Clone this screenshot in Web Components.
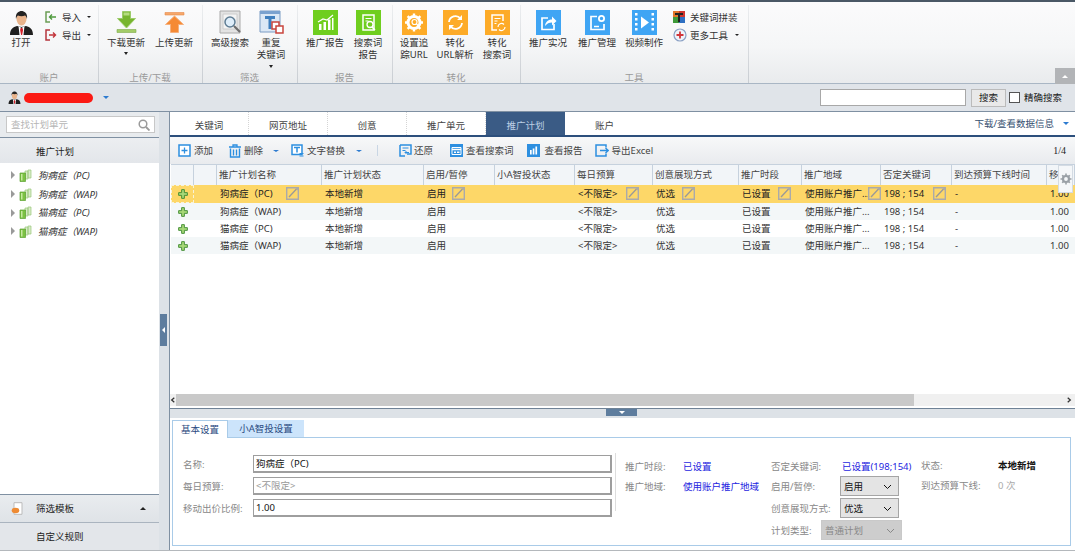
<!DOCTYPE html>
<html lang="zh"><head><meta charset="utf-8"><title>推广计划</title>
<style>
html,body{margin:0;padding:0;height:551px;overflow:hidden;background:#fff;font:9.5px/13px "Noto Sans","Noto Sans CJK SC",sans-serif;color:#333}
</style></head><body>
<app-shell></app-shell>
<script>
const ICONS={
person:[25,'<path d="M1 25c0-6 3-8 7-9l4.500 1 4.500-1c4 1 7 3 7 9z" fill="#1f1f1f"/><path d="M9.500 16l3 2 3-2-1 9h-4z" fill="#fff"/><path d="M11.600 18h1.800l.7 2-1 5h-1l-1-5z" fill="#d4202a"/><ellipse cx="12.500" cy="9" rx="5" ry="6.500" fill="#e9b48c"/><path d="M7 9c-1-6 3-8 5.500-8S19 3 18 9c-.5-2-1-3-2-3.500-2 1-5 1-7 0C8 6 7.500 7 7 9z" fill="#222"/>'],
imp:[12,'<path d="M5 1H1v10h4M1 1v10" fill="none" stroke="#6b9d55" stroke-width="1.500"/><path d="M11 6H5M7 3.500L4.500 6 7 8.500" fill="none" stroke="#4f9a3e" stroke-width="1.400"/>'],
exp:[12,'<path d="M5 1H1v10h4" fill="none" stroke="#b5353c" stroke-width="1.500"/><path d="M4 6h6M8 3.500L10.500 6 8 8.500" fill="none" stroke="#c2343a" stroke-width="1.400"/>'],
down:[25,'<path d="M8.500 1.500h8v7h5L12.500 18 3.500 8.500h5z" fill="#77b52f" stroke="#9ccb6a"/><path d="M3 19.500h19v3H3z" fill="#a3cc68" stroke="#7eab4a" stroke-width=".6"/><path d="M9.500 2.500h6v3h-6z" fill="#b4db7f"/>'],
up:[25,'<path d="M3 2.500h19v2.500H3z" fill="#f6a86c" stroke="#e88c49" stroke-width=".6"/><path d="M8.500 22.500h8v-8h5L12.500 6 3.500 14.500h5z" fill="#f58a34" stroke="#f6b07c"/>'],
srch:[25,'<path d="M2 1h20v22H2z" fill="#e3e3e3" stroke="#aaa"/><path d="M5 4h14v15H5z" fill="#f4f4f4" stroke="#ccc"/><circle cx="12" cy="12" r="5" fill="#dfeefa" stroke="#5f7d94" stroke-width="1.500"/><path d="M16 16l6 6" stroke="#6d6d6d" stroke-width="2.200"/>'],
rep:[25,'<path d="M1 1h20v21H1z" fill="#dbe8f5" stroke="#7b9cc4"/><path d="M1 1h20v3H1z" fill="#7aa2cf"/><path d="M6 6h10v3h-3.500v10h-3V9H6z" fill="#3f7fbe"/><path d="M13 12h7v7h-7z" fill="#fff" stroke="#c9453e" stroke-width="1.500"/><path d="M17 16h7v7h-7z" fill="#fff" stroke="#c9453e" stroke-width="1.500"/>'],
rpt:[25,'<path d="M0 0h25v25H0z" fill="#6fce1f"/><path d="M6 20v-6h2.500v6zM10.500 20v-8H13v8zM15 20V9.500h2.500V20zM19 20V8h1.500v12z" fill="#fff"/><path d="M5 12l5-3 4 1 6-5" fill="none" stroke="#fff" stroke-width="1.200"/>'],
srpt:[25,'<path d="M0 0h25v25H0z" fill="#6fce1f"/><path d="M7 5h11v15H7z" fill="none" stroke="#fff" stroke-width="1.500"/><path d="M9.500 8.500h6M9.500 11h3" stroke="#fff"/><circle cx="14" cy="14.500" r="3" fill="#6fce1f" stroke="#fff" stroke-width="1.300"/><path d="M16 17l3 3" stroke="#fff" stroke-width="1.500"/>'],
gear:[25,'<path d="M0 0h25v25H0z" fill="#fdab28"/><circle cx="12" cy="12.500" r="6" fill="none" stroke="#fff" stroke-width="3"/><path d="M12 3.500v3M12 18.500v3M3 12.500h3M18 12.500h3M5.600 6.100l2.100 2.100M16.300 16.800l2.100 2.100M5.600 18.900l2.100-2.100M16.300 8.200l2.100-2.100" stroke="#fff" stroke-width="2.400"/><circle cx="12.500" cy="12" r="2.500" fill="#fdab28" stroke="#fff" stroke-width="1.200"/><path d="M14.500 14l3 3" stroke="#fff" stroke-width="1.500"/>'],
sync:[25,'<path d="M0 0h25v25H0z" fill="#fdab28"/><path d="M6 12a6.500 6.500 0 0 1 11.500-3.500M19 13a6.500 6.500 0 0 1-11.500 3.500" fill="none" stroke="#fff" stroke-width="1.800"/><path d="M19 5v5h-5zM6 20v-5h5z" fill="#fff"/>'],
docr:[25,'<path d="M0 0h25v25H0z" fill="#fdab28"/><path d="M12 20H7V5h11v6" fill="none" stroke="#fff" stroke-width="1.500"/><path d="M9.500 8.500h6M9.500 11h3M9.500 13.500h2" stroke="#fff"/><path d="M13 17a3.500 3.500 0 0 1 6-2.500M20 17a3.500 3.500 0 0 1-6 2.500" fill="none" stroke="#fff" stroke-width="1.200"/>'],
share:[25,'<path d="M0 0h25v25H0z" fill="#3fa5f4"/><path d="M18 14v5.500H6V8h6" fill="none" stroke="#fff" stroke-width="1.700"/><path d="M9 16c.5-4 3-6.500 7-6.500V6.500l4.500 4.500-4.500 4.500V12.500c-3 0-5 1-7 3.500z" fill="#fff"/>'],
mgr:[25,'<path d="M0 0h25v25H0z" fill="#3fa5f4"/><path d="M12 6.500H6v13h13V14" fill="none" stroke="#fff" stroke-width="1.700"/><circle cx="16.500" cy="8.500" r="2.600" fill="none" stroke="#fff" stroke-width="1.800"/><path d="M9 16.500h5" stroke="#fff" stroke-width="1.500"/>'],
video:[25,'<path d="M0 0h25v25H0z" fill="#3fa5f4"/><path d="M9 6.500l8 6-8 6z" fill="#fff"/><path d="M3 3h2.500v2.500H3zM3 8h2.500v2.500H3zM3 13h2.500v2.500H3zM3 18h2.500v2.500H3zM19.500 3H22v2.500h-2.500zM19.500 8H22v2.500h-2.500zM19.500 13H22v2.500h-2.500zM19.500 18H22v2.500h-2.500z" fill="#fff"/>'],
tcol:[12,'<path d="M0 0h6v6H0z" fill="#e2762a"/><path d="M6 0h6v6H6z" fill="#d0342c"/><path d="M0 6h6v6H0z" fill="#3f9a3a"/><path d="M6 6h6v6H6z" fill="#2e6fc2"/><path d="M2 2h8v2H7v7H5V4H2z" fill="#222"/>'],
more:[14,'<circle cx="7" cy="7" r="6" fill="#eef3fa" stroke="#8aa0c4" stroke-width="1.200"/><path d="M7 3.500v7M3.500 7h7" stroke="#d0353a" stroke-width="1.800"/>'],
add:[13,'<path d="M1 1h11v11H1z" fill="#fff" stroke="#2d8fe0" stroke-width="1.500"/><path d="M6.500 3.500v6M3.500 6.500h6" stroke="#2d8fe0" stroke-width="1.300"/>'],
del:[14,'<path d="M1 3h12M5 1h4v2H5z" stroke="#2d8fe0" stroke-width="1.300" fill="none"/><path d="M2.500 4.500v8.500h9V4.500" fill="none" stroke="#2d8fe0" stroke-width="1.400"/><path d="M5.500 5.500v6M8.500 5.500v6" stroke="#2d8fe0" stroke-width="1.300"/>'],
txt:[13,'<path d="M1 1h10v9.500H1z" fill="#fff" stroke="#2d8fe0" stroke-width="1.500"/><path d="M3 3.500h6M6 3.500v5" stroke="#2d8fe0" stroke-width="1.500"/><path d="M8.500 9.500h4M8.500 12h4" stroke="#2d8fe0" stroke-width="1"/>'],
undo:[13,'<path d="M1 1h11v9H8M1 1v11h5" fill="none" stroke="#2d8fe0" stroke-width="1.500"/><path d="M3.500 4h6M3.500 6.500h3" stroke="#2d8fe0"/><path d="M10 8.500H6M7.500 7L6 8.500 7.500 10" fill="none" stroke="#2d8fe0"/>'],
sw:[13,'<path d="M0 0h13v13H0z" fill="#2d8fe0"/><path d="M2 3.500h9v7H2z" fill="none" stroke="#fff"/><path d="M2 5.500h9" stroke="#fff" stroke-width="1.500"/><path d="M4 7.500h2v1.500H4zM7 7.500h2.500v1.500H7z" fill="#fff"/>'],
bars:[13,'<path d="M0 0h13v13H0z" fill="#2d8fe0"/><path d="M3 6h1.700v4.500H3zM5.700 4.500h1.700v6H5.700zM8.400 2.500h1.700v8H8.400z" fill="#fff"/>'],
out:[14,'<path d="M11 3.500V1H1v11h10V9.500" fill="none" stroke="#2d8fe0" stroke-width="1.500"/><path d="M5 6.500h8M10.500 4l2.700 2.500L10.500 9" fill="none" stroke="#2d8fe0" stroke-width="1.400"/>'],
pen:[13,'<path d="M.7.700h11.600v11.600H.7z" fill="none" stroke="#aaa" stroke-width="1.400"/><path d="M3 10l7.500-8" stroke="#999" stroke-width="1.300"/><path d="M9.500 1h3v3z" fill="#aaa"/>'],
plus:[11,'<path d="M4 .7h3v3.300h3.300v3H7v3.300H4V7H.7V4H4z" fill="#a8d878" stroke="#3d8a2e"/>'],
leaf:[13,'<path d="M6 2h3v8H6zM9 1h3v8H9z" fill="#d9ecc8" stroke="#9ac77a" stroke-width=".7"/><path d="M1 4h5.500v8.500H1z" fill="#7cc243" stroke="#5da232" stroke-width=".7"/><path d="M2 5h1.500v6.500H2z" fill="#c6e89f"/>'],
mag:[12,'<circle cx="5" cy="5" r="3.800" fill="none" stroke="#9a9a9a" stroke-width="1.500"/><path d="M8 8l3.500 3.500" stroke="#9a9a9a" stroke-width="1.800"/>'],
tpl:[13,'<path d="M3 .7h8v11.600H3z" fill="#fff" stroke="#bbb"/><ellipse cx="4.500" cy="8.500" rx="3.800" ry="2.800" fill="#ee8b34"/>'],
cog:[12,'<circle cx="6" cy="6" r="3" fill="none" stroke="#9aa0a6" stroke-width="2.200"/><path d="M6 .5v2M6 9.500v2M.5 6h2M9.500 6h2M2.200 2.200l1.400 1.400M8.400 8.400l1.400 1.400M2.200 9.800l1.400-1.400M8.400 3.600l1.400-1.400" stroke="#9aa0a6" stroke-width="1.600"/>'],
chev:[9,'<path d="M1 3l3.500 3.500L8 3" fill="none" stroke="currentColor" stroke-width="1"/>'],
left:[7,'<path d="M5 1L2 3.500 5 6" fill="none" stroke="#333" stroke-width="1.500"/>'],
right:[7,'<path d="M2 1l3 2.500L2 6" fill="none" stroke="#333" stroke-width="1.500"/>']
};
function def(name,css,html){
  customElements.define(name,class extends HTMLElement{
    connectedCallback(){
      if(this.shadowRoot)return;
      const s=this.attachShadow({mode:'open'});
      const h=typeof html==='function'?html(this):html;
      s.innerHTML='<style>'+(typeof css==='function'?css(this):css)+'</style>'+h;
    }
  });
}
def('ui-icon',':host{display:inline-flex;flex:none;line-height:0}svg{display:block}',el=>{
  const [vb,p]=ICONS[el.getAttribute('name')];
  const z=el.getAttribute('size')||vb;
  return `<svg width="${z}" height="${z}" viewBox="0 0 ${vb} ${vb}">${p}</svg>`;
});
def('ui-caret',el=>`:host{display:inline-block;flex:none;width:0;height:0;border-left:${el.getAttribute('w')||3}px solid transparent;border-right:${el.getAttribute('w')||3}px solid transparent;${el.hasAttribute('up')?'border-bottom':'border-top'}:${el.getAttribute('h')||3}px solid ${el.getAttribute('color')||'#222'}}`,'');
def('rib-btn',el=>`:host{display:flex;flex:none;flex-direction:column;align-items:center;width:${el.getAttribute('w')}px;padding-top:8px;text-align:center;line-height:12.5px;color:#333}
.t{margin-top:1.500px;white-space:nowrap}ui-caret{margin-top:3px}`,
el=>`<ui-icon name="${el.getAttribute('icon')}"></ui-icon><div class="t"><slot></slot></div>${el.hasAttribute('caret')?'<ui-caret w="2" h="3"></ui-caret>':''}`);
def('rib-small',':host{display:flex;align-items:center;height:14px;white-space:nowrap;color:#333}ui-icon{margin-right:var(--g,5px)}ui-caret{margin-left:var(--c,6px)}',
el=>`<ui-icon name="${el.getAttribute('icon')}"></ui-icon><slot></slot>${el.hasAttribute('caret')?'<ui-caret w="2.500" h="2.500"></ui-caret>':''}`);
def('rib-group',el=>`:host{display:flex;flex:none;flex-direction:column;width:${el.getAttribute('w')}px;height:81px;box-sizing:border-box;position:relative}
.c{display:flex;flex:1;padding-left:${el.getAttribute('pl')||0}px;min-height:0}
.l{height:13px;text-align:center;color:#9a9a9a;line-height:15px}
.d{position:absolute;right:-1px;top:3px;bottom:0;width:1px;background:linear-gradient(#eceef0,#c9cdd2)}`,
el=>`<div class="c"><slot></slot></div><div class="l">${el.getAttribute('label')}</div><div class="d"></div>`);
def('rib-col',el=>`:host{display:flex;flex:none;flex-direction:column;gap:4px;padding:8px 0 0 ${el.getAttribute('pl')||0}px}`,'<slot></slot>');
def('app-ribbon',`:host{display:flex;height:81px;position:relative;background:linear-gradient(#fbfbfc 0,#f5f6f7 55%,#e9ebed 100%);border-bottom:1px solid #a9b6c4}
.col{position:absolute;right:0;bottom:-1px;width:20px;height:16px;background:#b2b4b7;display:flex;align-items:center;justify-content:center}`,
`<rib-group w="98" label="账户"><rib-btn w="42" icon="person">打开</rib-btn>
<rib-col pl="3"><rib-small icon="imp" caret>导入</rib-small><rib-small icon="exp" caret>导出</rib-small></rib-col></rib-group>
<rib-group w="104" pl="4" label="上传/下载"><rib-btn w="48" icon="down" caret>下载更新</rib-btn><rib-btn w="48" icon="up">上传更新</rib-btn></rib-group>
<rib-group w="95" pl="7" label="筛选"><rib-btn w="42" icon="srch">高级搜索</rib-btn><rib-btn w="40" icon="rep" caret>重复<br>关键词</rib-btn></rib-group>
<rib-group w="95" pl="7" label="报告"><rib-btn w="42" icon="rpt">推广报告</rib-btn><rib-btn w="44" icon="srpt">搜索词<br>报告</rib-btn></rib-group>
<rib-group w="128" pl="1" label="转化"><rib-btn w="42" icon="gear">设置追<br>踪URL</rib-btn><rib-btn w="40" icon="sync">转化<br>URL解析</rib-btn><rib-btn w="44" icon="docr">转化<br>搜索词</rib-btn></rib-group>
<rib-group w="228" pl="3" label="工具"><rib-btn w="50" icon="share">推广实况</rib-btn><rib-btn w="48" icon="mgr">推广管理</rib-btn><rib-btn w="46" icon="video">视频制作</rib-btn>
<rib-col pl="6"><rib-small icon="tcol" style="--g:5px">关键词拼装</rib-small><rib-small icon="more" style="--g:3px;--c:7px" caret>更多工具</rib-small></rib-col></rib-group>
<div class="col"><ui-caret up w="3.500" h="3" color="#fff"></ui-caret></div>`);
def('app-accountbar',`:host{display:flex;align-items:center;height:27px;background:#e0e4e9;border-bottom:1px solid #7f90a2;padding-left:8px;box-sizing:content-box;color:#222}
.red{width:69px;height:10px;border-radius:5px;background:#fb1a14;margin:0 10px 0 3px}
.in{width:144px;height:15px;border:1px solid #a8a8a8;background:#fff;margin-left:711px}
.btn{width:33px;height:16px;border:1px solid #bbb;background:#e9e9e9;margin-left:5px;text-align:center;line-height:16px}
.cb{width:9px;height:9px;border:1px solid #555;background:#fff;margin:0 4px 0 3px}`,
`<ui-icon name="person" size="13"></ui-icon><div class="red"></div><ui-caret w="3" h="3" color="#2d7bd0"></ui-caret>
<div class="in"></div><div class="btn">搜索</div><div class="cb"></div><span>精确搜索</span>`);
def('app-sidebar',`:host{display:flex;flex-direction:column;width:159px;flex:none;background:#fff}
.s{height:25px;background:#e8ebee;padding:4px 4px 0 6px;box-sizing:border-box}
.box{height:17px;box-sizing:border-box;border:1px solid #c8c8c8;background:#fff;color:#b5b5b5;display:flex;align-items:center;justify-content:space-between;padding:0 4px}
.band{height:26px;box-sizing:border-box;padding-top:1px;border-top:1px solid #7f90a2;background:linear-gradient(#eceef1,#e3e6ea);display:flex;align-items:center;padding-left:36px;color:#222}
.tree{flex:1;padding-top:3px}
.n{height:18.700px;display:flex;align-items:center;padding-left:11px;font-style:italic;color:#333}
.n i{display:block;width:0;height:0;border-left:4px solid #9a9a9a;border-top:4px solid transparent;border-bottom:4px solid transparent;margin-right:4px}
.n ui-icon{margin-right:6px}
.f{height:27px;border-top:1px solid #7f90a2;background:linear-gradient(#e9ecef,#dfe3e7);display:flex;align-items:center;padding:0 13px 0 11px;color:#222;border-bottom:1px solid #aab4bf}
.f span{flex:1;margin-left:12px}
.g{height:27px;background:#e3e6ea;padding-left:36px;line-height:27px;color:#222}`,
`<div class="s"><div class="box"><span>查找计划单元</span><ui-icon name="mag"></ui-icon></div></div>
<div class="band">推广计划</div>
<div class="tree">
<div class="n"><i></i><ui-icon name="leaf"></ui-icon>狗病症（PC)</div>
<div class="n"><i></i><ui-icon name="leaf"></ui-icon>狗病症（WAP)</div>
<div class="n"><i></i><ui-icon name="leaf"></ui-icon>猫病症（PC)</div>
<div class="n"><i></i><ui-icon name="leaf"></ui-icon>猫病症（WAP)</div>
</div>
<div class="f"><ui-icon name="tpl"></ui-icon><span>筛选模板</span><ui-caret up w="3" h="3"></ui-caret></div>
<div class="g">自定义规则</div>`);
def('v-split',`:host{display:flex;flex:none;width:11px;background:#dde2e7;border-right:1px solid #7f90a2;box-sizing:border-box;position:relative}
.h{position:absolute;left:1px;top:202px;width:7px;height:32px;background:#5e7d9e;display:flex;align-items:center;justify-content:center}
.h i{width:0;height:0;border-right:3px solid #fff;border-top:3px solid transparent;border-bottom:3px solid transparent}`,
`<div class="h"><i></i></div>`);
def('app-tabs',`:host{display:flex;height:23px;flex:none;border-bottom:2px solid #2c4f7c;background:#fff;align-items:stretch}
.t{width:79px;flex:none;display:flex;align-items:center;justify-content:center;color:#444;border-right:1px dotted #d5d5d5;box-sizing:border-box;padding-top:4px}
.t.on{background:#3a5b85;color:#bcd0e6;border:0}
.r{margin-left:auto;display:flex;align-items:center;color:#36506f;padding:0 6px 0 0;gap:9px}`,
`<div class="t">关键词</div><div class="t">网页地址</div><div class="t">创意</div><div class="t">推广单元</div><div class="t on">推广计划</div><div class="t" style="border:0">账户</div>
<div class="r">下载/查看数据信息 <ui-caret w="3" h="3" color="#2d7bd0"></ui-caret></div>`);
def('tb-item',`:host{display:inline-flex;align-items:center;color:#444;white-space:nowrap;flex:none}ui-icon{margin-right:var(--g,3px)}ui-caret{margin-left:var(--c,10px)}`,
el=>`<ui-icon name="${el.getAttribute('icon')}"></ui-icon><slot></slot>${el.hasAttribute('caret')?'<ui-caret w="3" h="2.500" color="#2d7bd0"></ui-caret>':''}`);
def('app-toolbar',`:host{display:flex;flex:none;align-items:center;height:27px;background:linear-gradient(#f7f8f9,#e9ebee);padding-left:8px;box-sizing:border-box}
.sep{width:1px;height:11px;background:#c9d6e4;margin:0 21px 0 15px}
.p{margin-left:auto;padding-right:9px;font-family:"Liberation Serif",serif;font-size:10px;color:#222}`,
`<tb-item icon="add" style="margin-right:15px">添加</tb-item>
<tb-item icon="del" style="margin-right:12px;--g:2px;--c:10px" caret>删除</tb-item>
<tb-item icon="txt" style="--g:3px;--c:11px" caret>文字替换</tb-item><div class="sep"></div>
<tb-item icon="undo" style="margin-right:17px;--g:2px">还原</tb-item>
<tb-item icon="sw" style="margin-right:13px">查看搜索词</tb-item>
<tb-item icon="bars" style="margin-right:12px;--g:5px">查看报告</tb-item>
<tb-item icon="out">导出Excel</tb-item><div class="p">1/4</div>`);
const COLS='23px 23px 105px 102px 71px 80px 78px 86px 63px 79px 71px 95px 28px';
const HEAD=['','','推广计划名称','推广计划状态','启用/暂停','小A智投状态','每日预算','创意展现方式','推广时段','推广地域','否定关键词','到达预算下线时间','移'];
const ROWS=['狗病症（PC)','狗病症（WAP)','猫病症（PC)','猫病症（WAP)'];
const PEN={2:23,4:30,6:14,7:44,8:11,9:0,10:6};
def('data-grid',`:host{display:block;flex:1;position:relative;background:#fff;overflow:hidden;padding-left:1px;box-sizing:border-box;min-height:0}
.r{display:grid;grid-template-columns:${COLS};height:17px;line-height:17px;color:#333}
.h{height:21px;line-height:20px;background:#f2f5f8;border-top:1px solid #c6d1dd;box-sizing:border-box;color:#444}
.h div{border-right:1px solid #c6d1dd;padding-left:2px;white-space:nowrap;overflow:hidden;box-sizing:border-box}
.c{padding-left:3px;white-space:nowrap;overflow:hidden;position:relative;box-sizing:border-box;min-width:0}
.alt{background:#f3f7f8}.sel{background:#fdd768;color:#222;height:18px;line-height:18px}
.sel .c0{outline:1px dashed #f8f3d8;outline-offset:-1px}
.c0{display:flex;align-items:center;padding-left:7px}
.pen{position:absolute;top:2px;display:block}
.gear{position:absolute;right:2px;top:1px;width:15px;height:28px;background:#f5f7f9;border:1px solid #d4dbe3;box-sizing:border-box;display:flex;align-items:center;justify-content:center}`,
()=>{
  let h='<div class="r h">'+HEAD.map(t=>`<div>${t}</div>`).join('')+'</div>';
  ROWS.forEach((n,i)=>{
    const v=['','',n,'本地新增','启用','','&lt;不限定&gt;','优选','已设置','使用账户推广...','198 ; 154','-','1.00'];
    h+=`<div class="r ${i==0?'sel':i%2?'alt':''}">`+v.map((t,k)=>{
      if(k==0)return `<div class="c c0"><ui-icon name="plus" size="10"></ui-icon></div>`;
      const p=(i==0&&PEN[k]!==undefined)?`<ui-icon class="pen" name="pen" style="right:${PEN[k]}px"></ui-icon>`:'';
      return `<div class="c">${t}${p}</div>`;
    }).join('')+'</div>';
  });
  return h+'<div class="gear"><ui-icon name="cog"></ui-icon></div>';
});
def('h-scroll',`:host{display:flex;height:12px;margin-bottom:2px;background:#f0f0f0;align-items:center;flex:none}
.a{width:6px;display:flex;justify-content:center;flex:none}.th{width:738px;height:12px;background:#c9c9c9;flex:none}.sp{flex:1}.b{padding-right:3px;display:flex}`,
`<div class="a"><ui-icon name="left" size="6"></ui-icon></div><div class="th"></div><div class="sp"></div><div class="b"><ui-icon name="right" size="6"></ui-icon></div>`);
def('h-split',`:host{display:flex;justify-content:center;height:9px;flex:none;background:#dde2e7;border-top:1px solid #6f8296}
.h{width:31px;height:7px;background:#5e7d9e;margin-left:-2px;display:flex;align-items:center;justify-content:center}
.h i{width:0;height:0;border-top:3px solid #fff;border-left:3px solid transparent;border-right:3px solid transparent}`,
`<div class="h"><i></i></div>`);
def('ui-input',el=>`:host{display:flex;align-items:center;height:18px;box-sizing:border-box;border:1px solid #9e9e9e;border-bottom-width:2px;border-right-width:2px;background:#fff;padding-left:2px;color:${el.hasAttribute('ph')?'#999':'#111'}}`,'<slot></slot>');
def('ui-select',el=>`:host{display:flex;align-items:center;justify-content:space-between;box-sizing:border-box;height:20px;width:${el.getAttribute('w')}px;border:1px solid ${el.hasAttribute('off')?'#c9c9c9':'#a5a5a5'};background:${el.hasAttribute('off')?'#cdcdcd':'#e4e4e4'};padding:0 6px 0 3px;color:${el.hasAttribute('off')?'#888':'#111'}}`,
`<slot></slot><ui-icon name="chev"></ui-icon>`);
def('detail-panel',`:host{display:flex;flex-direction:column;flex:none;height:132px;box-sizing:border-box;background:#fff;padding:2px 4px 4px 2px;color:#888}
.tabs{display:flex;height:18px;position:relative;z-index:1;margin-bottom:-1px;flex:none}
.t{height:18px;box-sizing:border-box;display:flex;align-items:center;justify-content:center;color:#2a4a80;line-height:16px}
.t1{width:56px;border:1px solid #a9cbe8;border-bottom:0;background:#fff}
.t2{width:76px;background:#cce4fb;border-bottom:1px solid #a9cbe8}
.p{flex:1;border:1px solid #a9cbe8;display:flex;padding-top:17px;box-sizing:border-box;min-height:0}
.c1{width:439px;padding-left:10px;box-sizing:border-box;display:grid;grid-template-columns:70px 359px;grid-auto-rows:18px;row-gap:4px;align-items:center;align-content:start;flex:none}
.dv{width:1px;height:58px;background:#ddd;margin:-2px 9px 0 3px;flex:none}
.c2{width:146px;flex:none;display:grid;grid-template-columns:58px 1fr;grid-auto-rows:20px;align-items:center;align-content:start;white-space:nowrap;padding-top:1px}
.v{color:#1d1de0}
.c3{width:150px;flex:none;white-space:nowrap;padding-top:1px}
.rw{display:flex;align-items:center;height:20px;margin-bottom:2px}
.rw:first-child{margin-bottom:0}
.c4{flex:1;display:grid;grid-template-columns:77px 1fr;grid-auto-rows:20px;align-items:center;align-content:start;white-space:nowrap}
b{color:#111;font-weight:700}.z{color:#aaa}`,
`<div class="tabs"><div class="t t1">基本设置</div><div class="t t2">小A智投设置</div></div>
<div class="p">
<div class="c1"><span>名称:</span><ui-input>狗病症（PC)</ui-input><span>每日预算:</span><ui-input ph>&lt;不限定&gt;</ui-input><span>移动出价比例:</span><ui-input>1.00</ui-input></div>
<div class="dv"></div>
<div class="c2"><span>推广时段:</span><span class="v">已设置</span><span>推广地域:</span><span class="v">使用账户推广地域</span></div>
<div class="c3"><div class="rw"><span style="width:71px">否定关键词:</span><span class="v">已设置(198;154)</span></div>
<div class="rw"><span style="width:69px">启用/暂停:</span><ui-select w="59">启用</ui-select></div>
<div class="rw"><span style="width:69px">创意展现方式:</span><ui-select w="59">优选</ui-select></div>
<div class="rw"><span style="width:50px">计划类型:</span><ui-select w="81" off>普通计划</ui-select></div></div>
<div class="c4"><span>状态:</span><b>本地新增</b><span>到达预算下线:</span><span class="z">0 次</span></div>
</div>`);
def('right-pane',`:host{display:flex;flex-direction:column;flex:1;min-width:0;background:#fff}`,
`<app-tabs></app-tabs><app-toolbar></app-toolbar><data-grid></data-grid><h-scroll></h-scroll><h-split></h-split><detail-panel></detail-panel>`);
def('app-shell',`:host{display:flex;flex-direction:column;height:551px;width:1075px;overflow:hidden}
.top{height:2px;background:#4a5866;flex:none}
.main{display:flex;height:438px;flex:none}
.ft{height:1px;background:#b4b8bc}`,
`<div class="top"></div><app-ribbon></app-ribbon><app-accountbar></app-accountbar>
<div class="main"><app-sidebar></app-sidebar><v-split></v-split><right-pane></right-pane></div><div class="ft"></div>`);
</script>
</body></html>
